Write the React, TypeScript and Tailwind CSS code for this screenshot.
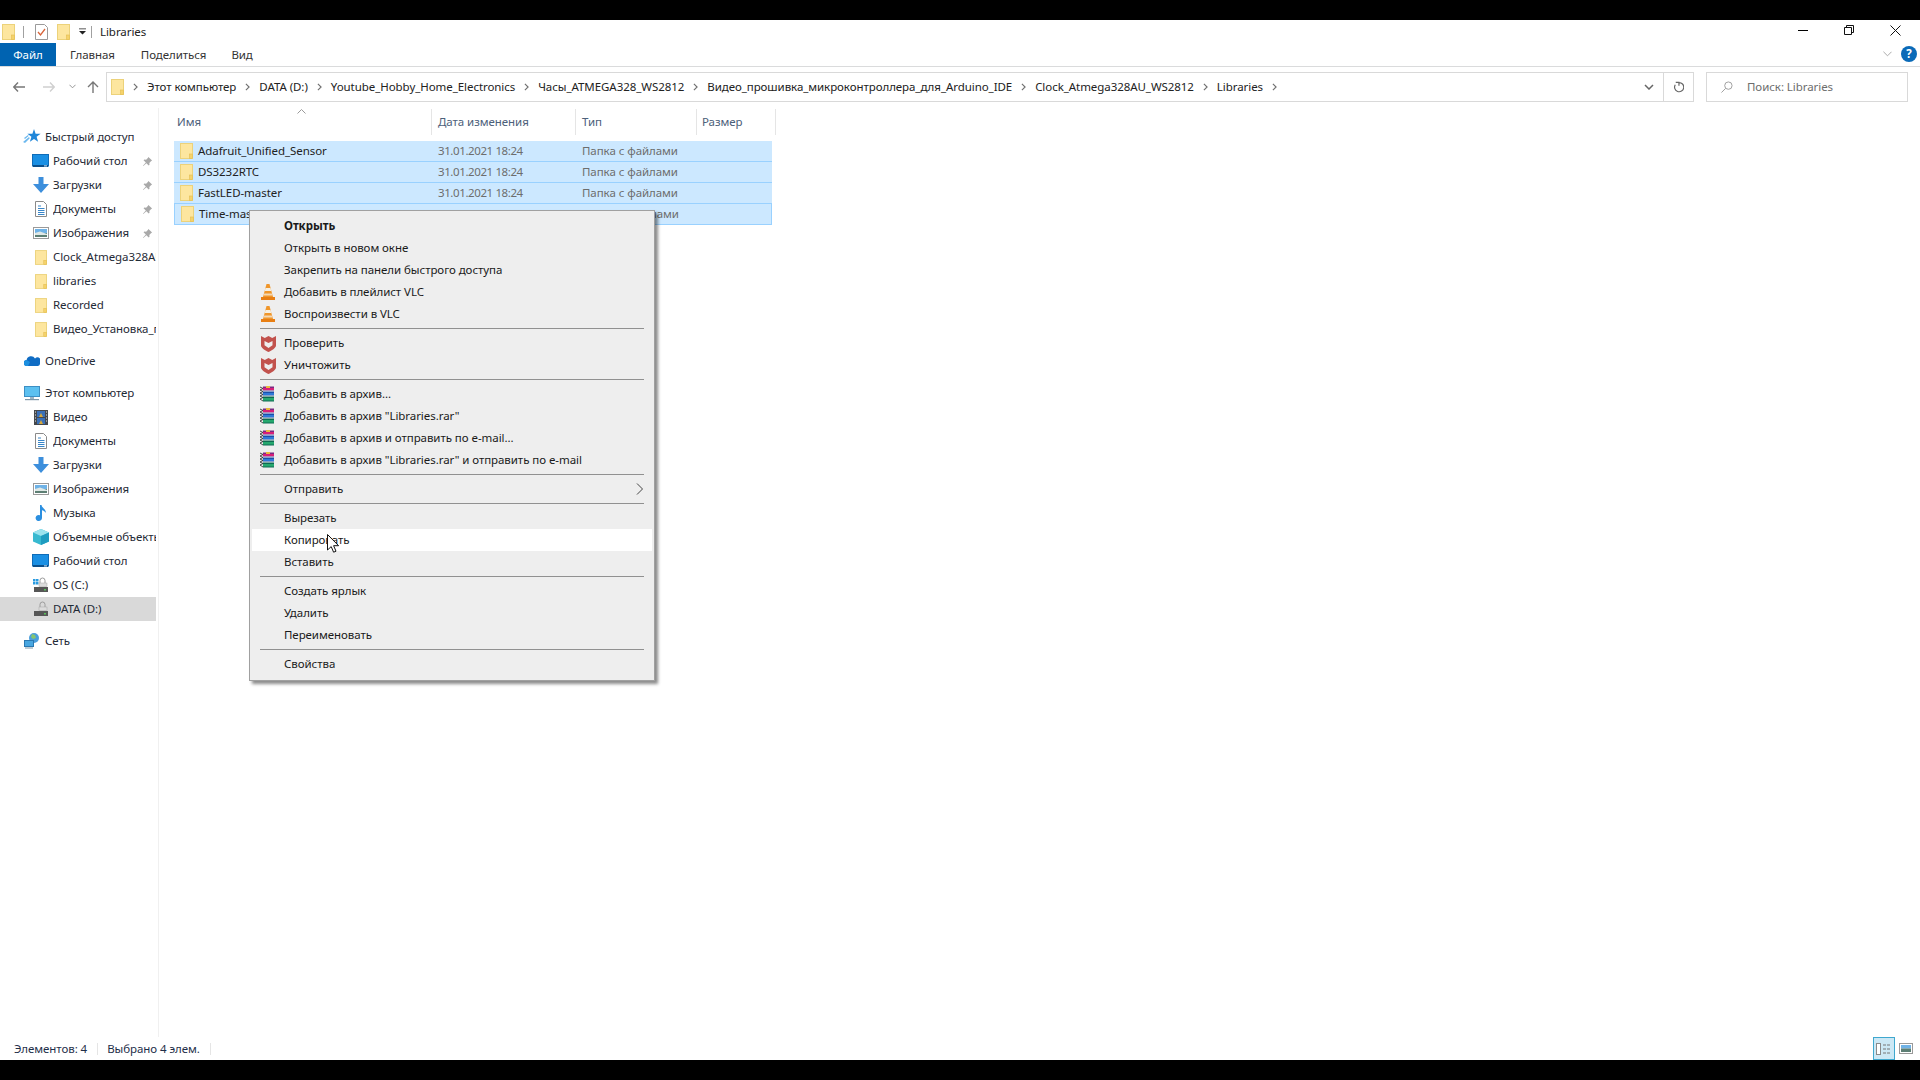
import { ReactNode } from 'react'

const Folder = ({ className = 'w-[13px] h-4' }: { className?: string }) => (
  <svg viewBox="0 0 13 16" className={`shrink-0 ${className}`}>
    <rect x="0.5" y="0.5" width="12" height="15" fill="#fde69f" stroke="#ecd27a" />
    <rect x="9.5" y="11" width="3" height="4.5" fill="#f5d36b" stroke="#e3bd52" strokeWidth="0.6" />
  </svg>
)

const Pin = () => (
  <svg viewBox="0 0 12 12" className="w-[11px] h-[11px]">
    <path d="M7 1l4 4-1.2.6L8 7.5 8.2 9.6 7.3 10.4 4.8 7.8 1.4 11 1 10.6 4.2 7.2 1.7 4.7 2.5 3.8 4.5 4 6.4 2.2z" fill="#a9a9a9" />
  </svg>
)

const Star = () => (
  <svg viewBox="0 0 18 16" className="w-[18px] h-4">
    <path d="M11 0l1.6 4.7 5 .1-4 3 1.5 4.9L11 10l-4.1 2.7 1.5-4.9-4-3 5-.1z" fill="#1f86d9" />
    <path d="M0 13l6-5 .8 1.2L2 14zM1 9l4-3 .6 1L2 10z" fill="#6db9ef" />
  </svg>
)

const Desktop = () => (
  <svg viewBox="0 0 17 14" className="w-[17px] h-[14px]">
    <rect x="0.5" y="0.5" width="16" height="11.5" fill="#1a8fe3" stroke="#0f6cb8" />
    <rect x="1" y="11" width="15" height="2" fill="#0b4f8a" />
    <rect x="12" y="11.4" width="3" height="1" fill="#cfe8fa" />
  </svg>
)

const Download = () => (
  <svg viewBox="0 0 16 16" className="w-4 h-4">
    <path d="M5.5 0h5v7H16l-8 9-8-9h5.500z" fill="#3d8fdc" />
  </svg>
)

const Doc = () => (
  <svg viewBox="0 0 12 16" className="w-3 h-4">
    <path d="M.5.5h8l3 3v12H.5z" fill="#fff" stroke="#8a8a8a" />
    <path d="M3 5h3M3 7.500h6.500M3 9.500h6.500M3 11.500h6.500M3 13.500h6.500" stroke="#3a86c8" strokeWidth="1" />
  </svg>
)

const Pictures = () => (
  <svg viewBox="0 0 16 13" className="w-4 h-[13px]">
    <rect x="0.5" y="0.5" width="15" height="11" fill="#fff" stroke="#9a9a9a" />
    <rect x="2" y="2" width="12" height="4" fill="#6fb2e6" />
    <rect x="2" y="6" width="12" height="4" fill="#5d7f74" />
    <path d="M2 6l5-1.500 7 2.500v1H2z" fill="#dfe8e6" />
  </svg>
)

const Cloud = () => (
  <svg viewBox="0 0 16 10" className="w-4 h-[10px]">
    <path d="M3 10a3 3 0 0 1-.4-6A4.500 4.500 0 0 1 11 2.600 3.500 3.500 0 0 1 16 7.500 2.500 2.500 0 0 1 14 10z" fill="#0f6cc4" />
    <path d="M3 10a3 3 0 0 1-.4-6l3.400 2-2 4z" fill="#1c8fe0" />
  </svg>
)

const Pc = () => (
  <svg viewBox="0 0 16 15" className="w-4 h-[15px]">
    <rect x="0.5" y="0.5" width="15" height="10" fill="#5cc0f0" stroke="#3c8fc4" />
    <rect x="6" y="11" width="4" height="2" fill="#9db4c4" />
    <rect x="1" y="13" width="14" height="1.200" fill="#7f97a8" />
  </svg>
)

const Film = () => (
  <svg viewBox="0 0 14 15" className="w-[14px] h-[15px]">
    <rect width="14" height="15" fill="#45484c" />
    <rect x="3" y="1" width="8" height="6" fill="#3a70b8" />
    <rect x="3" y="8" width="8" height="6" fill="#3a70b8" />
    <path d="M5 7l2-4 2 4M5 14l2-4 2 4" fill="#d8a83a" />
    <path d="M1 2h1M1 5h1M1 8h1M1 11h1M12 2h1M12 5h1M12 8h1M12 11h1" stroke="#e9e9e9" />
  </svg>
)

const Music = () => (
  <svg viewBox="0 0 12 17" className="w-3 h-[17px]">
    <path d="M5 0h1.500c.3 3 4.500 4 4.500 8-1-1.500-2.500-2.500-4-2.800V13a3.200 3 0 1 1-2-2.800z" fill="#2b8fe0" />
  </svg>
)

const Cube = () => (
  <svg viewBox="0 0 16 16" className="w-4 h-4">
    <path d="M8 0l8 3.500v9L8 16 0 12.500v-9z" fill="#37b9d0" />
    <path d="M8 0l8 3.500L8 7 0 3.500z" fill="#9be3ee" />
    <path d="M8 7v9l8-3.500v-9z" fill="#1e9cc0" />
  </svg>
)

const Drive = ({ windows = false }: { windows?: boolean }) => (
  <svg viewBox="0 0 16 16" className="w-4 h-4">
    {windows && <path d="M0 2h2.500v2.500H0zM3 2h2.500v2.500H3zM0 5h2.500v2.500H0zM3 5h2.500v2.500H3z" fill="#2a9be0" />}
    <path d="M7 6V3.500a2.500 2.500 0 0 1 5 0V6" fill="none" stroke="#9c9c9c" />
    <rect x="6" y="6" width="8" height="3.500" fill="#dcdcdc" stroke="#a8a8a8" strokeWidth="0.5" />
    <rect x="1" y="10" width="14" height="5" fill="#565656" />
    <rect x="11" y="12" width="2" height="1.500" fill="#58c05a" />
  </svg>
)

const Net = () => (
  <svg viewBox="0 0 16 16" className="w-4 h-4">
    <circle cx="10" cy="5" r="5" fill="#4a9edc" />
    <path d="M8 1l3 1 1 3-3 1-2-2z" fill="#86c56e" />
    <rect x="0.5" y="7.500" width="9" height="6" fill="#48a6e0" stroke="#2a78b0" />
    <rect x="1" y="14.500" width="8" height="1" fill="#7f97a8" />
  </svg>
)

const Vlc = () => (
  <svg viewBox="0 0 14 16" className="w-[14px] h-4">
    <path d="M5.500 0h3L12 13H2z" fill="#f0962a" />
    <path d="M4.500 4h5l.8 3h-6.600z" fill="#f5efe2" />
    <path d="M3.200 9.500h7.600l.6 2H2.600z" fill="#f5efe2" opacity="0.75" />
    <rect y="13" width="14" height="3" fill="#e87f14" />
  </svg>
)

const Shield = () => (
  <svg viewBox="0 0 15 17" className="w-[15px] h-[17px]">
    <path d="M0 1L3.800 3 7.500 1 11.200 3 15 1V10.500c0 2.500-4.500 5-7.500 6.500C4.500 15.500 0 13 0 10.500z" fill="#c2524d" />
    <path d="M3.500 6L7.500 8l4-2v4.300L7.500 13 3.500 10.300z" fill="#eeeeee" />
  </svg>
)

const Rar = () => (
  <svg viewBox="0 0 17 16" className="w-[17px] h-4">
    <path d="M3 .5h11v4H3z" fill="#7a2a82" />
    <path d="M3 2h11v2H3z" fill="#d81f78" />
    <path d="M3 5.500h11v4H3z" fill="#1c4fa8" />
    <path d="M3 7h11v2H3z" fill="#2e78d8" />
    <path d="M3 10.500h11v5H3z" fill="#0e6a52" />
    <path d="M3 12h11v2.500H3z" fill="#25a86e" />
    <path d="M0 1l3 1.500L0 4l3 1.500L0 7l3 1.500L0 10l3 1.500L0 13l3 2" fill="none" stroke="#222" strokeWidth="0.8" />
    <rect x="6" y="0" width="4" height="2" fill="#e8b83c" />
  </svg>
)

const Chev = () => (
  <svg viewBox="0 0 6 10" className="w-[5px] h-2 shrink-0">
    <path d="M1 1l4 4-4 4" fill="none" stroke="#6f6f6f" strokeWidth="1.400" />
  </svg>
)

const NavRow = ({ icon, label, pin, child = true, selected }: { icon: ReactNode; label: string; pin?: boolean; child?: boolean; selected?: boolean }) => (
  <div className={`flex items-center h-6 w-[156px] ${child ? 'pl-8' : 'pl-[23px]'} ${selected ? 'bg-[#d9d9d9]' : ''}`}>
    <span className={`flex items-center justify-center shrink-0 h-4 ${child ? 'w-[17px] mr-1' : 'w-[18px] mr-1'}`}>{icon}</span>
    <span className="flex-1 overflow-hidden whitespace-nowrap text-[#1f2a36]">{label}</span>
    {pin && <span className="flex items-center shrink-0 mr-[3px] ml-1"><Pin /></span>}
  </div>
)

const quick = [
  { icon: <Desktop />, label: 'Рабочий стол', pin: true },
  { icon: <Download />, label: 'Загрузки', pin: true },
  { icon: <Doc />, label: 'Документы', pin: true },
  { icon: <Pictures />, label: 'Изображения', pin: true },
  { icon: <Folder className="w-3 h-[15px]" />, label: 'Clock_Atmega328AU_WS2812' },
  { icon: <Folder className="w-3 h-[15px]" />, label: 'libraries' },
  { icon: <Folder className="w-3 h-[15px]" />, label: 'Recorded' },
  { icon: <Folder className="w-3 h-[15px]" />, label: 'Видео_Установка_программ' },
]

const computer = [
  { icon: <Film />, label: 'Видео' },
  { icon: <Doc />, label: 'Документы' },
  { icon: <Download />, label: 'Загрузки' },
  { icon: <Pictures />, label: 'Изображения' },
  { icon: <Music />, label: 'Музыка' },
  { icon: <Cube />, label: 'Объемные объекты' },
  { icon: <Desktop />, label: 'Рабочий стол' },
  { icon: <Drive windows />, label: 'OS (C:)' },
  { icon: <Drive />, label: 'DATA (D:)', selected: true },
]

const files = ['Adafruit_Unified_Sensor', 'DS3232RTC', 'FastLED-master', 'Time-master']
const crumbs = ['Этот компьютер', 'DATA (D:)', 'Youtube_Hobby_Home_Electronics', 'Часы_ATMEGA328_WS2812', 'Видео_прошивка_микроконтроллера_для_Arduino_IDE', 'Clock_Atmega328AU_WS2812', 'Libraries']

type MenuEntry = { label?: string; icon?: ReactNode; bold?: boolean; hover?: boolean; arrow?: boolean }

const menu: MenuEntry[] = [
  { label: 'Открыть', bold: true },
  { label: 'Открыть в новом окне' },
  { label: 'Закрепить на панели быстрого доступа' },
  { label: 'Добавить в плейлист VLC', icon: <Vlc /> },
  { label: 'Воспроизвести в VLC', icon: <Vlc /> },
  {},
  { label: 'Проверить', icon: <Shield /> },
  { label: 'Уничтожить', icon: <Shield /> },
  {},
  { label: 'Добавить в архив...', icon: <Rar /> },
  { label: 'Добавить в архив "Libraries.rar"', icon: <Rar /> },
  { label: 'Добавить в архив и отправить по e-mail...', icon: <Rar /> },
  { label: 'Добавить в архив "Libraries.rar" и отправить по e-mail', icon: <Rar /> },
  {},
  { label: 'Отправить', arrow: true },
  {},
  { label: 'Вырезать' },
  { label: 'Копировать', hover: true },
  { label: 'Вставить' },
  {},
  { label: 'Создать ярлык' },
  { label: 'Удалить' },
  { label: 'Переименовать' },
  {},
  { label: 'Свойства' },
]

const ContextMenu = () => (
  <div className="absolute left-[249px] top-[190px] w-[406px] pt-1 pb-[5px] px-[2px] bg-[#eeeeee] border border-[#a0a0a0] shadow-[3px_3px_3px_rgba(0,0,0,0.45)] text-[#1a1a1a]">
    {menu.map((m, i) =>
      m.label ? (
        <div key={i} className={`flex items-center h-[22px] ${m.hover ? 'bg-white' : ''}`}>
          <span className="flex items-center justify-center w-[32px] shrink-0">{m.icon}</span>
          <span className={`flex-1 whitespace-nowrap ${m.bold ? 'font-bold' : ''}`}>{m.label}</span>
          {m.arrow && (
            <svg viewBox="0 0 7 12" className="w-[7px] h-3 mr-[9px]">
              <path d="M1 .5L6.500 6 1 11.500" fill="none" stroke="#444" />
            </svg>
          )}
        </div>
      ) : (
        <div key={i} className="h-[7px] flex items-center pl-[8px] pr-[8px]">
          <div className="h-px w-full bg-[#909090]" />
        </div>
      )
    )}
  </div>
)

const Cursor = () => (
  <svg viewBox="0 0 12 19" className="absolute left-[327px] top-[514px] w-3 h-[19px]">
    <path d="M.5.5v15.500l3.700-3.400 2.400 5.600 2.400-1-2.400-5.500h5z" fill="#fff" stroke="#111" />
  </svg>
)

export default function App() {
  return (
    <div className="h-[1080px] w-[1920px] flex flex-col bg-black overflow-hidden text-[11.5px] tracking-[-0.06px] [font-family:'Noto_Sans',sans-serif]">
      <div className="h-5 shrink-0" />
      <div className="h-[1040px] flex flex-col bg-white relative">
        {/* title bar */}
        <div className="h-[23px] shrink-0 flex items-center pl-[2px]">
          <Folder />
          <div className="w-px h-3 bg-[#a0a0a0] ml-2" />
          <svg viewBox="0 0 13 16" className="w-[13px] h-4 ml-[11px]">
            <path d="M.5.5h9l3 3v12H.5z" fill="#fff" stroke="#9a9a9a" />
            <path d="M3 8l2.500 3L10 5" fill="none" stroke="#d8643a" strokeWidth="1.300" />
          </svg>
          <Folder className="w-[13px] h-4 ml-[9px]" />
          <svg viewBox="0 0 8 7" className="w-[7px] h-[7px] ml-[9px]">
            <path d="M0 0h8v1H0zM0 3h8L4 7z" fill="#222" />
          </svg>
          <div className="w-px h-3 bg-[#a0a0a0] ml-[5px]" />
          <span className="ml-2 text-[#222]">Libraries</span>
          <div className="flex-1" />
          <div className="w-[10px] h-px bg-black mr-[36px] -mt-[3px]" />
          <svg viewBox="0 0 10 10" className="w-[10px] h-[10px] mr-[36px] -mt-[3px]">
            <path d="M.5 2.500h7v7h-7zM2.500 2.500v-2h7v7h-2" fill="none" stroke="#111" />
          </svg>
          <svg viewBox="0 0 11 11" className="w-[11px] h-[11px] mr-[19px] -mt-[3px]">
            <path d="M.5.500l10 10M10.500.500l-10 10" stroke="#111" />
          </svg>
        </div>

        {/* ribbon tabs */}
        <div className="h-[24px] shrink-0 flex border-b border-[#dadbdc]">
          <div className="w-14 h-[23px] bg-[#0063b1] text-white flex items-center justify-center">Файл</div>
          <div className="ml-[14px] pt-[3px] text-[#333]">Главная</div>
          <div className="ml-[26px] pt-[3px] text-[#333]">Поделиться</div>
          <div className="ml-[25px] pt-[3px] text-[#333]">Вид</div>
          <div className="flex-1" />
          <svg viewBox="0 0 10 6" className="w-[9px] h-[6px] mt-2 mr-[9px]">
            <path d="M.5.500L5 5 9.500.500" fill="none" stroke="#a0a0a0" />
          </svg>
          <div className="w-4 h-4 rounded-full bg-[#0a6ab8] text-white font-bold flex items-center justify-center mr-[3px] mt-[3px]">?</div>
        </div>

        {/* address row */}
        <div className="h-[41px] shrink-0 flex items-start pt-[5px]">
          <div className="w-[106px] h-[29px] shrink-0 flex items-center pl-[13px]">
            <svg viewBox="0 0 12 10" className="w-3 h-[10px]">
              <path d="M5 .5L.8 5 5 9.500M1 5h11" fill="none" stroke="#777" strokeWidth="1.400" />
            </svg>
            <svg viewBox="0 0 12 10" className="w-3 h-[10px] ml-[18px]">
              <path d="M7 .5L11.200 5 7 9.500M11 5H0" fill="none" stroke="#d0d0d0" strokeWidth="1.400" />
            </svg>
            <svg viewBox="0 0 8 5" className="w-[7px] h-[5px] ml-[14px]">
              <path d="M.5.500L4 4 7.500.500" fill="none" stroke="#888" />
            </svg>
            <svg viewBox="0 0 12 12" className="w-3 h-3 ml-[11px]">
              <path d="M1 6l5-5 5 5M6 1v11" fill="none" stroke="#777" strokeWidth="1.400" />
            </svg>
          </div>
          <div className="w-[1588px] h-[30px] shrink-0 border border-[#d9d9d9] flex items-center">
            <Folder className="w-[13px] h-4 ml-[4px] mr-[9px]" />
            <div className="flex items-center gap-[9px] flex-1 text-[#222] whitespace-nowrap">
              {crumbs.map(c => (
                <div key={c} className="flex items-center gap-[9px]">
                  <Chev />
                  <span>{c}</span>
                </div>
              ))}
              <Chev />
            </div>
            <svg viewBox="0 0 10 6" className="w-[10px] h-[6px] mr-[9px]">
              <path d="M1 1l4 4 4-4" fill="none" stroke="#666" strokeWidth="1.500" />
            </svg>
            <div className="w-[30px] h-full border-l border-[#d9d9d9] flex items-center justify-center">
              <svg viewBox="0 0 12 13" className="w-[11px] h-3">
                <path d="M3 1.500h3.500V5M6.300 1.700A5 5 0 1 1 2.500 4" fill="none" stroke="#666" strokeWidth="1.300" />
              </svg>
            </div>
          </div>
          <div className="w-[202px] h-[30px] ml-3 shrink-0 border border-[#d9d9d9] flex items-center pl-[14px] text-[#6d6d6d]">
            <svg viewBox="0 0 13 13" className="w-3 h-3 mr-[14px]">
              <circle cx="8" cy="5" r="4" fill="none" stroke="#999" />
              <path d="M5 8l-4.500 4.500" stroke="#999" />
            </svg>
            Поиск: Libraries
          </div>
        </div>

        {/* main */}
        <div className="flex-1 flex min-h-0">
          <div className="w-[159px] shrink-0 border-r border-[#f0f0f0] pt-[17px]">
            <NavRow icon={<Star />} label="Быстрый доступ" child={false} />
            {quick.map(r => <NavRow key={r.label} {...r} />)}
            <div className="h-2" />
            <NavRow icon={<Cloud />} label="OneDrive" child={false} />
            <div className="h-2" />
            <NavRow icon={<Pc />} label="Этот компьютер" child={false} />
            {computer.map(r => <NavRow key={r.label} {...r} />)}
            <div className="h-2" />
            <NavRow icon={<Net />} label="Сеть" child={false} />
          </div>
          <div className="flex-1 pl-[15px]">
            <div className="flex h-[27px] pt-px text-[#4c607a] relative">
              <div className="w-[258px] pl-[3px] flex items-center border-r border-[#e5e5e5]">Имя</div>
              <div className="w-[144px] pl-[6px] flex items-center border-r border-[#e5e5e5]">Дата изменения</div>
              <div className="w-[121px] pl-[6px] flex items-center border-r border-[#e5e5e5]">Тип</div>
              <div className="w-[79px] pl-[5px] flex items-center border-r border-[#e5e5e5]">Размер</div>
              <svg viewBox="0 0 9 5" className="absolute left-[123px] top-[1px] w-[9px] h-[5px]">
                <path d="M.5 4.500L4.500.5l4 4" fill="none" stroke="#9a9a9a" />
              </svg>
            </div>
            <div className="mt-[6px] w-[598px]">
              {files.map((f, i) => (
                <div key={f} className={`flex items-center bg-[#cce8ff] border-[#99d1ff] ${i === 3 ? 'border h-[22px] -mt-px' : 'border-b h-[21px]'} text-[#6d6d6d]`}>
                  <div className="w-[258px] pl-[6px] flex items-center gap-[5px] text-[#222]">
                    <Folder />
                    {f}
                  </div>
                  <div className="w-[144px] pl-[6px] tracking-[-0.4px]">31.01.2021 18:24</div>
                  <div className="pl-[6px]">Папка с файлами</div>
                </div>
              ))}
            </div>
          </div>
        </div>

        {/* status bar */}
        <div className="h-[23px] shrink-0 flex items-center text-[#1f2f4a] relative">
          <div className="ml-[14px]">Элементов: 4</div>
          <div className="w-px h-3 bg-[#e5e5e5] ml-[10px]" />
          <div className="ml-[9px]">Выбрано 4 элем.</div>
          <div className="w-px h-3 bg-[#e5e5e5] ml-[10px]" />
          <div className="flex-1" />
          <div className="w-[22px] h-[23px] bg-[#cce8f5] border border-[#3fa8cf] flex items-center justify-center mr-[4px]">
            <svg viewBox="0 0 16 12" className="w-4 h-3">
              <rect x="0.5" y="0.5" width="4" height="11" fill="#fff" stroke="#8a8a8a" />
              <path d="M7 2h3M11 2h3M7 6h3M11 6h3M7 10h3M11 10h3" stroke="#777" />
            </svg>
          </div>
          <div className="mr-[7px]">
            <svg viewBox="0 0 14 11" className="w-[14px] h-[11px]">
              <rect x="0.5" y="0.5" width="13" height="10" fill="#fff" stroke="#999" />
              <rect x="2" y="2" width="10" height="3.500" fill="#6fb2e6" />
              <rect x="2" y="5.500" width="10" height="3.500" fill="#5d7f74" />
            </svg>
          </div>
        </div>

        <ContextMenu />
        <Cursor />
      </div>
      <div className="h-5 shrink-0" />
    </div>
  )
}
